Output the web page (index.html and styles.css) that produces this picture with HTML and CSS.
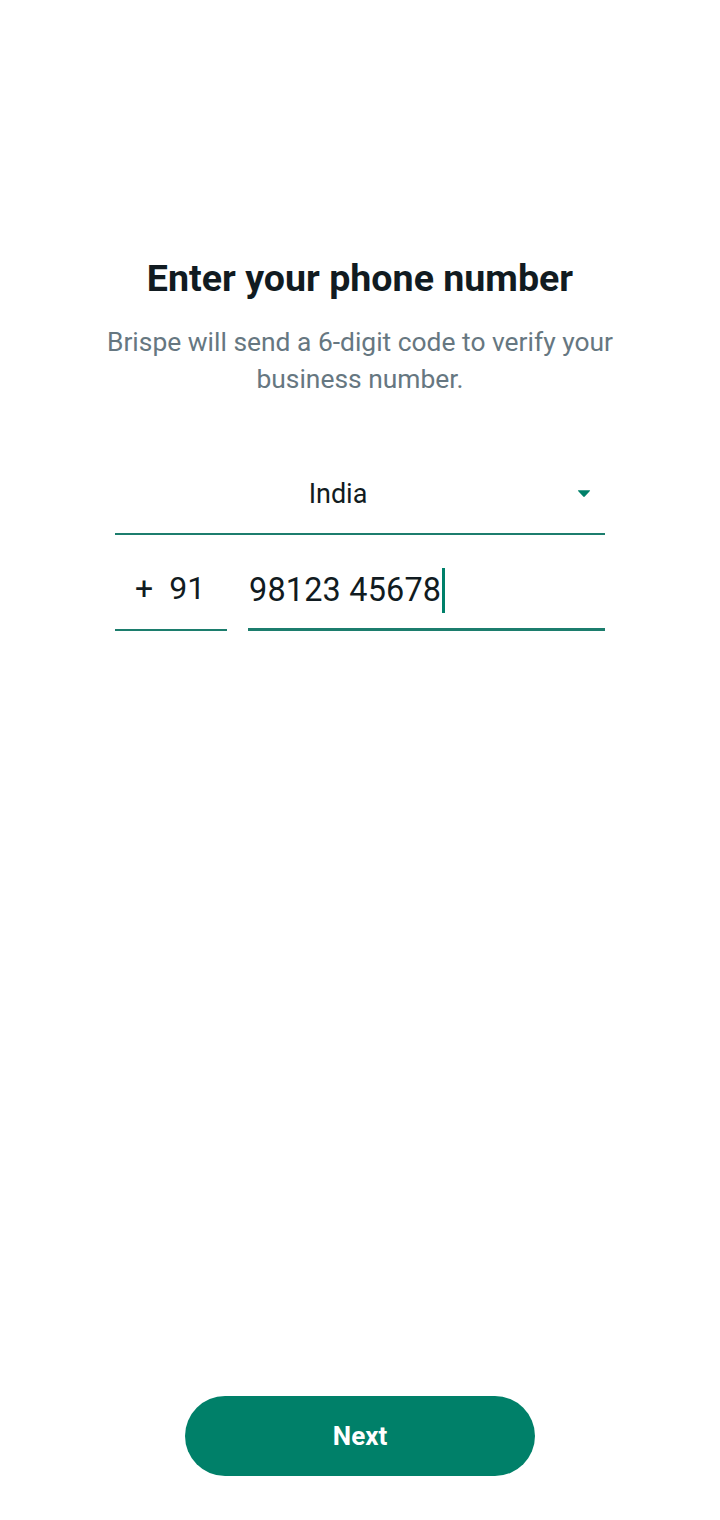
FILE: index.html
```html
<!DOCTYPE html>
<html lang="en">
<head>
<meta charset="utf-8">
<title>Enter your phone number</title>
<link rel="stylesheet" href="styles.css">
</head>
<body>
<main class="screen">
  <section class="intro">
    <h1 class="title">Enter your phone number</h1>
    <p class="subtitle">Brispe will send a 6-digit code to verify your business number.</p>
  </section>
  <section class="form">
    <div class="country">
      <span class="country-name">India</span>
      <svg class="caret" width="14" height="9" viewBox="0 0 14 9"><path d="M1.5 1.2 H12.5 Q13.6 1.2 12.9 2.1 L7.8 7.6 Q7 8.4 6.2 7.6 L1.1 2.1 Q0.4 1.2 1.5 1.2 Z" fill="#008069"/></svg>
    </div>
    <div class="phone-row">
      <div class="code"><span class="plus">+</span><span class="code-num">91</span></div>
      <div class="number"><span class="number-text">98123 45678</span><span class="cursor"></span></div>
    </div>
  </section>
  <div class="actions">
    <button class="next" type="button">Next</button>
  </div>
</main>
</body>
</html>
```
FILE: styles.css
```css
html, body {
  margin: 0;
  padding: 0;
  background: #ffffff;
}
body {
  font-family: Roboto, "Noto Sans", "Liberation Sans", sans-serif;
  color: #111b21;
}
.screen {
  min-height: 1520px;
  display: flex;
  flex-direction: column;
  align-items: center;
  box-sizing: border-box;
  padding: 255px 0 44px;
}
.intro {
  text-align: center;
  width: 600px;
}
.title {
  margin: 0;
  font-size: 37.6px;
  font-weight: 700;
  line-height: 46px;
  color: #111b21;
}
.subtitle {
  margin: 23px 0 0;
  font-size: 26.4px;
  line-height: 37px;
  color: #667781;
}
.form {
  width: 490px;
  margin-top: 63px;
}
.country {
  height: 72px;
  border-bottom: 2px solid #1c7d6d;
  display: flex;
  align-items: center;
  justify-content: center;
  position: relative;
}
.country-name {
  font-size: 27px;
  color: #111b21;
  margin-left: -44px;
  margin-top: -6px;
}
.caret {
  position: absolute;
  right: 14px;
  top: 28px;
}
.phone-row {
  display: flex;
  gap: 21px;
  margin-top: 20px;
}
.code {
  width: 112px;
  height: 76px;
  box-sizing: border-box;
  border-bottom: 2px solid #1c7d6d;
  display: flex;
  align-items: center;
  padding-left: 20px;
  font-size: 32px;
  color: #111b21;
}
.plus {
  margin-right: 16px;
  margin-top: -8px;
}
.code-num {
  margin-top: -8px;
}
.number {
  flex: 1;
  height: 76px;
  box-sizing: border-box;
  border-bottom: 3px solid #1c7d6d;
  display: flex;
  align-items: center;
  font-size: 32.4px;
  color: #111b21;
}
.number-text {
  margin-left: 1px;
  margin-top: -4px;
  letter-spacing: 0.2px;
}
.cursor {
  display: inline-block;
  width: 3px;
  height: 45px;
  background: #00806a;
  margin-left: 1px;
  margin-top: -2px;
}
.actions {
  margin-top: auto;
}
.next {
  width: 350px;
  height: 80px;
  border: none;
  border-radius: 40px;
  background: #008069;
  color: #ffffff;
  font-family: Roboto, "Noto Sans", "Liberation Sans", sans-serif;
  font-size: 26px;
  font-weight: 700;
  padding: 0;
}
```
